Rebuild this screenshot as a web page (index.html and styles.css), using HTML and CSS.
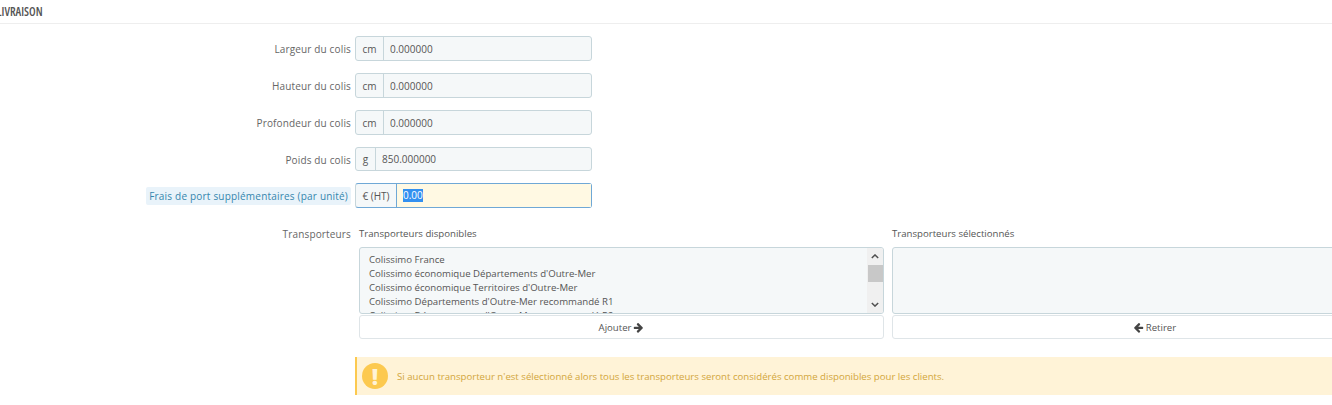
FILE: index.html
```html
<!DOCTYPE html>
<html lang="fr">
<head>
<meta charset="utf-8">
<title>Livraison</title>
<link rel="stylesheet" href="styles.css">
</head>
<body>
<div class="panel">
  <h3 class="heading">Livraison</h3>
  <div class="rows">
    <div class="row"><label class="label">Largeur du colis</label><div class="group"><span class="addon">cm</span><input class="field" value="0.000000" readonly></div></div>
    <div class="row"><label class="label">Hauteur du colis</label><div class="group"><span class="addon">cm</span><input class="field" value="0.000000" readonly></div></div>
    <div class="row"><label class="label">Profondeur du colis</label><div class="group"><span class="addon">cm</span><input class="field" value="0.000000" readonly></div></div>
    <div class="row row-short"><label class="label">Poids du colis</label><div class="group"><span class="addon addon-g">g</span><input class="field" value="850.000000" readonly></div></div>
    <div class="row"><label class="label"><span class="hint">Frais de port supplémentaires (par unité)</span></label><div class="group group-focus"><span class="addon addon-eur">€ (HT)</span><div class="field field-focus"><span class="selected">0.00</span></div></div></div>
  </div>
  <div class="carriers">
    <div class="label carriers-label">Transporteurs</div>
    <div class="carriers-cols">
      <div class="col">
        <div class="col-title">Transporteurs disponibles</div>
        <div class="list">
          <div class="options">
            <div>Colissimo France</div>
            <div>Colissimo économique Départements d'Outre-Mer</div>
            <div>Colissimo économique Territoires d'Outre-Mer</div>
            <div>Colissimo Départements d'Outre-Mer recommandé R1</div>
            <div>Colissimo Départements d'Outre-Mer recommandé R2</div>
          </div>
          <div class="scrollbar">
            <svg class="sb-arrow" viewBox="0 0 10 6"><path d="M1 5l4-4 4 4" fill="none" stroke="#505050" stroke-width="1.8"/></svg>
            <div class="sb-thumb"></div>
            <svg class="sb-arrow sb-down" viewBox="0 0 10 6"><path d="M1 1l4 4 4-4" fill="none" stroke="#505050" stroke-width="1.8"/></svg>
          </div>
        </div>
        <div class="btn">Ajouter <svg class="ico" viewBox="0 0 1792 1792"><path d="M1600 960q0 54-37 91l-651 651q-39 37-91 37-51 0-90-37l-75-75q-38-38-38-91t38-91l293-293h-704q-52 0-84.5-37.5t-32.5-90.5v-128q0-53 32.5-90.5t84.5-37.5h704l-293-294q-38-36-38-90t38-90l75-75q38-38 90-38 53 0 91 38l651 651q37 35 37 90z"/></svg></div>
      </div>
      <div class="col">
        <div class="col-title">Transporteurs sélectionnés</div>
        <div class="list"></div>
        <div class="btn"><svg class="ico" viewBox="0 0 1792 1792"><path d="M1664 896v128q0 53-32.5 90.5t-84.5 37.5h-704l293 294q38 36 38 90t-38 90l-75 76q-37 37-90 37-52 0-91-37l-651-652q-37-37-37-90 0-52 37-91l651-650q38-38 91-38 52 0 90 38l75 74q38 38 38 91t-38 91l-293 293h704q52 0 84.5 37.5t32.5 90.5z"/></svg> Retirer</div>
      </div>
    </div>
  </div>
  <div class="alert">
    <span class="alert-icon">!</span>
    <span>Si aucun transporteur n'est sélectionné alors tous les transporteurs seront considérés comme disponibles pour les clients.</span>
  </div>
</div>
</body>
</html>
```

FILE: styles.css
```css
* { box-sizing: border-box; }
html, body { margin: 0; padding: 0; height: 405px; overflow: hidden; background: #fff; }
body { font-family: "Open Sans", "Liberation Sans", sans-serif; font-size: 10px; color: #555; }
.panel { width: 1500px; }
.heading {
  margin: 0 0 0 -3px; height: 24px; padding-top: 4px; border-bottom: 1px solid #eee;
  font-size: 11.7px; line-height: 14px; font-weight: 600; text-transform: uppercase;
  font-stretch: 75%; color: #555; width: 1503px;
}
.rows { display: flex; flex-direction: column; gap: 12px; padding-top: 12px; }
.row { display: flex; align-items: center; height: 25px; }
.row-short { height: 24px; }
.row-short .group { height: 24px; }
.row-short .label { padding-top: 1px; }
.label { width: 351px; text-align: right; font-size: 10px; line-height: 14px; color: #666; flex: none; letter-spacing: .015em; }
.hint { display: inline-block; padding: 2px 3px; background: #e9f3fa; color: #3586ae; border-radius: 2px; letter-spacing: .02em; }
.group { display: flex; width: 237px; height: 25px; margin-left: 4px; border: 1px solid #c7d6db; border-radius: 3px; background: #f5f8f9; }
.group-focus { border-color: #6fa8d6; border-left-color: #c7d6db; }
.addon { display: flex; align-items: center; justify-content: center; flex: none; width: 28px; border-right: 1px solid #c7d6db; font-size: 10px; color: #555; }
.addon-g { width: 20px; }
.addon-eur { width: 41px; border-right-color: #6fa8d6; }
.field { flex: 1; min-width: 0; border: 0; background: transparent; padding: 0 6px; font: inherit; font-size: 10px; color: #555; outline: 0; }
.field-focus { display: flex; align-items: center; background: #fff9e3; padding: 0 6px; }
.selected { background: #3390f0; color: #fff; line-height: 13px; }
.carriers { display: flex; margin-top: 18px; }
.carriers-label { padding-top: 1px; }
.carriers-cols { display: flex; gap: 8px; margin-left: 8px; }
.col { width: 525px; flex: none; }
.col-title { height: 14px; margin-top: 1px; font-size: 9.65px; line-height: 14px; color: #555; }
.list { display: flex; justify-content: space-between; height: 67px; margin-top: 6px; border: 1px solid #c7d6db; border-radius: 3px; background: #f5f8f9; overflow: hidden; }
.options { flex: 1; padding: 5px 9px; font-size: 9.65px; line-height: 14px; color: #555; white-space: nowrap; overflow: hidden; }
.scrollbar { display: flex; flex-direction: column; align-items: center; width: 16px; flex: none; background: #f0f0f0; }
.sb-arrow { width: 8px; height: 5px; margin-top: 6px; }
.sb-down { margin-top: auto; margin-bottom: 6px; }
.sb-thumb { width: 15px; height: 17px; margin-top: 6px; background: #c8c8c8; }
.btn { display: flex; align-items: center; justify-content: center; gap: 2px; height: 24px; margin-top: 1px; border: 1px solid #dfe5e8; border-radius: 3px; background: #fff; font-size: 9.6px; color: #555; }
.ico { width: 11px; height: 11px; fill: #444; }
.alert { display: flex; align-items: center; gap: 9px; height: 38px; margin: 18px 0 0 355px; padding-left: 5px; background: #fff3d7; border-left: 2px solid #fcc94f; font-size: 9.65px; color: #d2a63c; }
.alert-icon { display: flex; align-items: center; justify-content: center; width: 26px; height: 26px; border-radius: 50%; background: #fcc94f; color: #fff3d7; font-size: 22px; font-weight: 800; line-height: 1; flex: none; }
```
